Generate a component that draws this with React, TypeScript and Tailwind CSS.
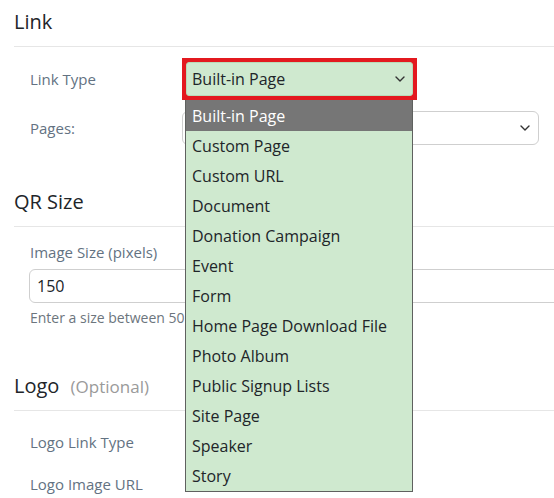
import React from "react";

const items = [
  "Built-in Page",
  "Custom Page",
  "Custom URL",
  "Document",
  "Donation Campaign",
  "Event",
  "Form",
  "Home Page Download File",
  "Photo Album",
  "Public Signup Lists",
  "Site Page",
  "Speaker",
  "Story",
];

function Chevron() {
  return (
    <svg width="10" height="6" viewBox="0 0 10 6" fill="none">
      <path d="M1 1 L5 5 L9 1" stroke="#333" strokeWidth="1.4" strokeLinecap="round" strokeLinejoin="round" />
    </svg>
  );
}

export default function App() {
  return (
    <div className="w-[554px] h-[498px] overflow-hidden bg-white relative font-['Open_Sans',sans-serif]">
      <div className="w-[620px] pl-[14px]">
        {/* Link section */}
        <div className="pt-[10px] pb-[12px] border-b border-[#e6e6e6] text-[20px] leading-[24px] text-[#212529]">
          Link
        </div>
        <div className="flex items-center mt-[11px] h-[42px]">
          <div className="w-[168px] pl-[16px] text-[15px] leading-[20px] text-[#637282]">Link Type</div>
          <div className="relative">
            <div className="w-[235px] h-[42px] border-[4px] border-[#e3191f] bg-[#e3191f]">
              <div className="h-full rounded-[3px] border border-[#b8dbb8] bg-[#cfe9cf] flex items-center justify-between pl-[5px] pr-[7px] text-[16px] text-[#212529]">
                <span>Built-in Page</span>
                <Chevron />
              </div>
            </div>
            <div className="absolute left-[3px] top-[42px] w-[228px] z-10 bg-[#cfe9cf] border-x border-b border-[#5f615f]">
              {items.map((it, i) => (
                <div
                  key={it}
                  className={
                    i === 0
                      ? "h-[31px] pt-[1px] leading-[30px] pl-[6px] text-[16px] bg-[#767676] text-white whitespace-nowrap"
                      : "h-[30px] leading-[30px] pl-[6px] text-[16px] text-[#212529] whitespace-nowrap"
                  }
                >
                  {it}
                </div>
              ))}
            </div>
          </div>
        </div>
        <div className="flex items-center mt-[11px] h-[34px]">
          <div className="w-[168px] pl-[16px] text-[15px] leading-[20px] text-[#637282]">Pages:</div>
          <div className="w-[357px] h-[34px] rounded-[6px] border border-[#cfcfcf] bg-white flex items-center justify-end pr-[8px]">
            <Chevron />
          </div>
        </div>

        {/* QR Size */}
        <div className="mt-[45px] pb-[12px] border-b border-[#e6e6e6] text-[20px] leading-[24px] text-[#212529]">
          QR Size
        </div>
        <div className="pl-[16px] mt-[15px] text-[15px] leading-[20px] text-[#637282]">Image Size (pixels)</div>
        <div className="ml-[15px] mt-[7px] h-[34px] rounded-[6px] border border-[#cfcfcf] flex items-center pl-[7px] text-[16px] text-[#212529]">
          150
        </div>
        <div className="pl-[16px] mt-[5px] text-[14px] leading-[20px] text-[#6c757d]">
          Enter a size between 50 and 1000
        </div>

        {/* Logo */}
        <div className="mt-[46px] pb-[11px] border-b border-[#e6e6e6] text-[20px] leading-[24px] text-[#212529]">
          Logo <span className="ml-[6px] text-[17px] text-[#9a9a9a]">(Optional)</span>
        </div>
        <div className="pl-[16px] mt-[21px] text-[15px] leading-[20px] text-[#637282]">Logo Link Type</div>
        <div className="pl-[16px] mt-[22px] text-[15px] leading-[20px] text-[#637282]">Logo Image URL</div>
      </div>
    </div>
  );
}
